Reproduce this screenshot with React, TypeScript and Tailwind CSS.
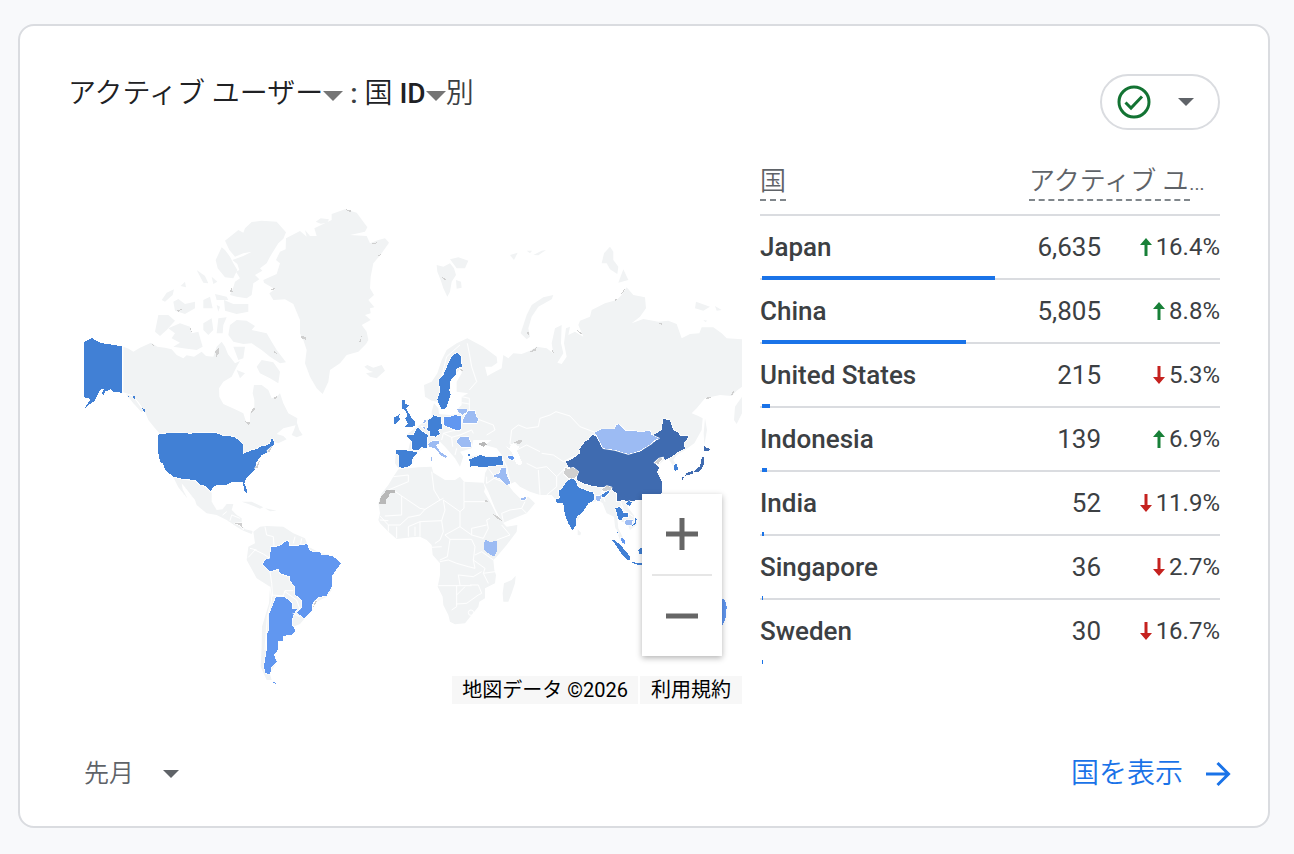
import clsx from "clsx";

type Shape = { d: string; fill: string };

const LAND = "#f1f3f4";
const NAVY = "#3f6bb0";
const BLUE = "#4180d5";
const SKY = "#6197f0";
const PALE = "#9cbbf3";
const GRAY = "#cfcfcf";
const DARK_GRAY = "#b8b8b8";

const rows = [
	{ name: "Japan", users: 6635, change: 16.4 },
	{ name: "China", users: 5805, change: 8.8 },
	{ name: "United States", users: 215, change: -5.3 },
	{ name: "Indonesia", users: 139, change: 6.9 },
	{ name: "India", users: 52, change: -11.9 },
	{ name: "Singapore", users: 36, change: -2.7 },
	{ name: "Sweden", users: 30, change: -16.7 },
];

const maxUsers = rows[0].users;

const northAmerica: Shape[] = [
	// Canada
	{
		fill: LAND,
		d: "M160,440L176,446 190,455 210,443 243,428 262,440 285,443 305,448 320,465 340,475 350,466 372,470 395,455 408,468 430,470 440,440 455,425 465,440 474,463 480,470 495,490 510,483 500,500 485,530 460,545 447,565 448,590 460,612 495,628 520,640 528,665 540,668 540,640 553,620 553,600 548,580 552,555 575,555 595,570 605,595 620,590 630,580 640,610 655,640 682,655 680,675 640,685 620,702 640,708 650,718 625,730 610,725 585,740 545,755 520,765 500,720 440,702 270,702 255,685 235,660 225,635 205,605 185,585 160,577Z",
	},
	{ fill: LAND, d: "M672,690L680,665 688,690 698,705 680,712 665,705Z" },
	// Arctic islands
	{
		fill: LAND,
		d: "M465,122L505,90 520,98 525,85 545,66 575,62 620,65 648,97 640,116 625,130 600,170 590,190 570,205 577,212 555,225 568,238 550,250 545,285 530,295 500,290 480,285 490,262 495,245 510,235 498,215 508,210 502,192 487,180 520,168 545,155 520,160 495,170 478,150Z",
	},
	{ fill: LAND, d: "M455,142L465,150 480,170 490,190 502,210 490,235 465,232 443,205 437,180Z" },
	{ fill: LAND, d: "M295,385L330,370 360,380 365,400 385,395 392,420 398,440 380,450 340,445 310,440 330,428 305,415 315,400Z" },
	{ fill: LAND, d: "M265,345L295,345 315,362 290,390 270,408 255,395Z" },
	{ fill: LAND, d: "M310,305L325,297 345,312 375,305 375,325 345,342 315,332Z" },
	{ fill: LAND, d: "M275,300L290,278 312,268 308,285 285,305Z" },
	{ fill: LAND, d: "M332,258L345,245 348,262ZM380,210L405,228 415,250 400,248ZM425,230L442,245 430,252Z" },
	{ fill: LAND, d: "M462,300L490,312 535,312 535,335 500,342 465,332Z" },
	{ fill: LAND, d: "M435,282L470,290 475,300 440,300ZM400,300L420,290 428,325 400,325ZM440,315L450,320 445,335Z" },
	{ fill: LAND, d: "M400,370L425,355 430,390 415,405 400,390ZM445,355L470,352 460,375 458,400 440,400Z" },
	{ fill: LAND, d: "M480,375L500,360 530,362 555,378 545,390 590,400 605,425 620,450 648,487 630,490 600,470 575,450 545,430 520,432 490,425 475,405Z" },
	{ fill: LAND, d: "M575,480L610,487 630,515 625,550 600,535 570,520 560,500Z" },
	{ fill: LAND, d: "M490,440L525,440 520,475 505,480ZM500,510L525,520 510,535Z" },
	{
		fill: GRAY,
		d: "M436,455L448,442 446,462 438,472ZM480,275L484,262 489,276ZM540,640L553,620 554,628 545,640ZM525,664L542,668 535,674ZM610,450L622,463 613,458ZM608,594L624,586 618,598ZM320,330L338,327 325,335ZM245,428L256,440 248,436ZM360,380L366,398 362,392Z",
	},
	// Alaska
	{
		fill: BLUE,
		d: "M42,427L65,414 75,420 85,426 100,430 120,433 157,439 157,578 145,577 130,575 122,568 105,575 100,587 96,580 102,566 92,568 80,590 75,602 60,612 42,628 60,600 55,595 42,592Z",
	},
	{ fill: LAND, d: "M168,582L190,590 220,632 214,636 190,610Z" },
	{ fill: BLUE, d: "M190,587L195,590 194,598 190,595ZM213,622L225,629 225,636 220,632ZM172,584L177,588 175,591Z" },
];

const greenland: Shape[] = [
	{
		fill: LAND,
		d: "M40,240L80,222 90,190 78,180 90,155 107,148 108,115 150,93 170,110 165,90 180,108 200,108 193,85 245,60 245,42 285,28 320,38 352,82 345,95 300,105 350,108 360,130 385,120 405,115 417,128 395,160 370,190 362,230 360,265 372,285 355,300 373,322 360,325 362,340 345,345 362,360 335,375 350,395 355,420 348,432 325,455 290,465 270,490 240,510 235,545 218,582 200,565 180,530 165,490 170,450 160,420 150,400 150,360 130,312 105,298 70,300 58,280 75,268 42,248Z",
	},
	{ fill: LAND, d: "M197,65L212,55 237,58 232,68 212,71Z" },
	// Iceland, Svalbard
	{ fill: LAND, d: "M343,500L358,512 370,516 348,520 360,530 380,535 405,512 395,495 370,503 352,495Z" },
	{ fill: LAND, d: "M560,195L580,200 600,190 612,205 618,225 605,245 600,275 592,290 580,265 572,240 562,215Z" },
	{ fill: LAND, d: "M600,178L625,172 655,182 645,205 620,205ZM618,240L633,245 635,263 620,266Z" },
	{
		fill: GRAY,
		d: "M150,407L166,410 170,420 156,415ZM380,168L398,160 388,170ZM285,27L308,33 300,36ZM365,130L382,127 375,133ZM60,268L77,264 70,270ZM577,232L590,238 583,240ZM328,425L335,408 333,427Z",
	},
];

const eurasia: Shape[] = [
	{
		fill: LAND,
		d: "M192,555L215,545 232,520 245,480 260,450 290,430 322,415 350,430 370,440 410,470 412,488 395,500 375,500 382,528 405,515 425,505 430,465 445,475 460,460 485,462 510,452 530,440 560,445 580,460 575,430 585,385 605,375 603,430 610,460 592,488 605,492 620,470 612,430 618,385 630,380 625,405 645,395 670,410 655,375 660,362 690,350 695,330 735,310 770,300 785,285 800,262 820,285 855,292 858,325 840,350 815,370 850,357 895,365 925,362 950,372 965,415 990,402 1018,400 1025,382 1060,382 1085,400 1100,415 1146,418 1146,560 1130,572 1115,588 1080,585 1035,595 1010,625 995,640 1015,648 1028,655 1025,690 1003,730 975,750 950,765 940,780 955,805 948,815 940,800 925,775 912,780 890,800 905,840 905,880 870,905 830,900 815,908 802,920 825,950 830,975 810,990 802,970 785,965 772,955 775,985 790,1015 795,1035 780,1020 765,980 762,950 740,940 728,910 715,900 705,905 690,905 665,940 650,965 638,993 620,960 605,905 585,897 575,885 540,885 510,875 480,860 465,845 445,855 460,875 480,895 505,890 525,910 500,940 430,968 425,965 405,925 385,875 372,850 375,820 385,800 330,795 330,770 355,765 400,770 425,765 410,745 375,735 395,720 365,720 340,720 335,745 300,755 310,770 300,800 285,775 255,740 240,725 225,730 200,740 165,760 160,785 140,805 115,805 105,790 108,750 145,750 152,720 135,708 165,685 200,660 215,650 215,635 222,610 235,625 237,642 270,645 295,642 295,625 305,615 305,590 325,580 290,575 290,545 305,520 306,500 280,530 270,550 272,590 245,630 232,605 215,602 195,590Z",
	},
	{ fill: "#ffffff", d: "M462,730L478,740 470,750 488,790 480,797 468,790 462,770 448,745 455,732Z" },
	// Arctic coast islands and Kamchatka
	{ fill: LAND, d: "M580,285L550,292 515,315 500,345 482,400 500,418 510,410 505,385 515,350 535,320 575,298Z" },
	{ fill: LAND, d: "M750,140L760,155 760,180 775,200 772,222 750,208 740,190 725,190 732,160ZM790,208L805,240 775,248Z" },
	{ fill: LAND, d: "M1008,305L1050,320 1030,332 1005,325ZM1065,318L1085,330 1070,332ZM1030,360L1042,362 1036,366Z" },
	{ fill: LAND, d: "M450,165L473,158 462,180ZM500,152L516,152 510,160ZM520,165L545,152 558,150 535,166Z" },
	{ fill: LAND, d: "M1146,590L1125,620 1122,660 1130,672 1146,640ZM1035,655L1041,690 1033,735 1031,700Z" },
	{ fill: LAND, d: "M653,988L663,998 661,1006 653,1005Z" },
	{
		fill: GRAY,
		d: "M505,458L530,442 528,452ZM574,445L583,460 577,455ZM650,388L668,402 658,400ZM890,366L910,372 905,375ZM756,299L772,298 768,302ZM782,282L797,263 790,278ZM1113,585L1122,570 1120,583ZM1035,593L1056,591 1040,598ZM504,385L508,410 502,400ZM462,728L478,719 488,722 478,732ZM296,505L312,510 305,515Z",
	},
	{ fill: DARK_GRAY, d: "M355,732L370,725 382,733 370,740Z" },
];

const eurasiaBorders =
	"M470,765L450,730 455,690 475,675 500,685 535,680 540,655 570,645 588,635 630,648 660,680 705,697M540,755L500,735 470,750M545,760L580,765 610,785 640,770 690,765M500,790L530,805 560,800 590,830 620,800M535,810L540,885M590,830L590,860 560,885M322,430L328,460 335,500 350,545 328,570M300,435L260,470 245,530M305,590L328,595 328,640M305,608L328,612M355,658L400,675 405,690 380,705M303,690L280,692 250,700M340,700L335,690 300,705 275,712 250,700 245,720M290,745L285,765M275,712L278,740M425,768L440,800 452,855M385,805L402,828M380,830L380,850 402,835 452,855M430,965L425,940 450,930 485,925 500,940M485,925L495,905M440,770L470,780M650,858L690,880 705,882M735,905L725,875 750,870M780,900L790,930 820,950M440,740L460,760M120,765L118,800";

const coloredEurope: Shape[] = [
	// Sweden
	{ fill: BLUE, d: "M290,38L295,42 303,50 305,80 290,85 287,105 272,120 268,150 272,165 265,185 258,205 245,208 232,180 240,155 237,120 250,105 265,70 275,50Z" },
	// United Kingdom, Ireland
	{ fill: BLUE, d: "M125,180L135,180 134,192 147,195 138,205 150,225 155,235 165,245 165,256 155,262 135,260 143,250 136,235 143,228 135,210 126,205Z" },
	{ fill: BLUE, d: "M102,230L112,229 119,221 118,232 120,240 106,252 101,250Z" },
	// France, Spain, Germany
	{ fill: BLUE, d: "M173,262L180,270 195,280 203,285 200,325 185,322 175,332 155,328 155,305 143,290 136,287 160,285 165,275Z" },
	{ fill: BLUE, d: "M108,330L150,332 172,338 158,355 156,370 145,380 125,384 118,380 118,345 108,340Z" },
	{ fill: BLUE, d: "M205,240L215,235 220,226 232,230 242,232 246,265 232,270 240,280 228,290 210,288 210,275 202,270Z" },
	{ fill: SKY, d: "M252,232L270,230 285,226 303,228 303,265 295,272 275,265 252,255Z" },
	{ fill: PALE, d: "M292,208L320,208 320,215 308,225 295,215Z" },
	{ fill: PALE, d: "M308,240L325,212 345,212 348,230 355,238 350,250 310,250Z" },
	{ fill: PALE, d: "M292,300L302,292 325,290 335,315 330,322 305,322 292,308Z" },
	{ fill: PALE, d: "M205,312L218,303 235,302 238,310 228,316 240,335 262,350 258,354 245,348 225,325 207,320Z" },
	{ fill: PALE, d: "M188,248L196,238 198,246 192,250ZM184,259L195,262 193,267ZM212,352H216V362H212Z" },
	// Turkey, Azerbaijan
	{ fill: BLUE, d: "M328,358L345,352 360,345 385,352 410,350 425,348 430,375 400,377 370,382 345,378 330,380ZM323,342H331V348H323Z" },
	{ fill: SKY, d: "M443,349L453,347 463,352 460,360 448,357Z" },
	{ fill: PALE, d: "M425,382L437,385 440,405 452,432 440,434 420,415 402,410 402,406 418,400Z" },
	{ fill: PALE, d: "M483,475L491,474 499,468 499,476 494,480 484,480Z" },
];

const africa: Shape[] = [
	{
		fill: LAND,
		d: "M115,28L175,22 215,20 220,38 255,60 285,60 300,50 312,65 370,68 375,85 372,95 390,125 410,165 430,190 440,200 472,195 470,215 440,255 410,290 400,300 403,330 408,345 405,370 375,385 375,415 358,425 355,440 335,465 315,490 285,493 270,485 265,465 250,435 248,410 233,380 240,345 240,310 218,285 215,255 200,240 180,230 155,232 110,237 85,215 60,190 55,180 60,160 55,130 65,100 85,75 100,50Z",
	},
	{ fill: LAND, d: "M467,347L465,370 455,400 445,425 430,425 428,400 432,370 455,360Z" },
];

const africaBorders =
	"M103,93L125,108 180,145 195,148 240,120 250,115 M215,35L222,90 240,120M312,65V125H380M312,125V145L300,155 250,120M125,108V165L75,168M195,148L180,165 145,172 120,195 85,195 60,168M110,200V235M145,200V230M165,200V228M180,185V230M180,185L245,182 255,150 250,120M245,182L250,215 240,240 225,250M255,225L300,200 300,155M300,200L335,225 370,235 385,205 380,180 390,175M270,238L335,238 345,260 340,300 345,325 325,320 290,310 265,300 240,305M345,285L365,275 400,300M340,300L375,325 370,340 385,370M235,377H335M295,345L300,375M295,345L340,350 365,335M290,378V440L275,450M315,380L290,405M290,432L320,430 355,405 365,400 355,375 330,375M370,340L405,335M410,240L450,225 425,195M100,50L145,45 145,65 85,90M335,225V205L380,195M245,260L215,262M255,225L270,238 262,290 240,300M325,458a8,8 0 1,0 16,0a8,8 0 1,0 -16,0M145,200L180,185M85,195V215M60,180L85,182";

const coloredAfrica: Shape[] = [
	{ fill: DARK_GRAY, d: "M80,90H104V98H90L86,112 78,118V131H57L62,112Z" },
	{ fill: PALE, d: "M374,238L390,247 411,242 411,275 402,290 390,283 372,270Z" },
	{ fill: GRAY, d: "M373,126L379,118 384,126ZM400,163L415,170 427,184 412,176Z" },
];

const americas: Shape[] = [
	{
		fill: LAND,
		d: "M310,232L345,240 375,242 405,262 425,278 425,305 440,330 458,328 470,312 490,312 485,330 500,345 515,355 515,375 525,388 548,393 545,402 520,392 500,380 470,360 440,345 410,340 380,315 375,300 345,262 335,250 338,268 352,295 325,262Z",
	},
	{ fill: LAND, d: "M515,305L545,305 580,322 570,326 535,312ZM585,325L620,332 600,334Z" },
	{
		fill: LAND,
		d: "M550,395L570,380 590,378 640,380 670,400 705,415 715,440 750,458 790,467 812,492 788,525 785,570 770,590 740,605 725,635 703,657 690,672 670,680 675,690 665,705 640,710 625,730 625,750 610,770 620,785 600,822 605,840 590,840 572,800 575,740 576,680 597,610 600,560 560,535 530,480 535,440 555,430Z",
	},
	{
		fill: BLUE,
		d: "M264,105L276,101 330,99 360,101 385,99 436,98 460,108 490,110 505,120 518,133 518,163 545,150 560,148 570,140 590,136 600,130 605,117 610,118 612,135 605,142 590,158 575,165 560,185 555,210 530,232 523,250 530,268 530,281 524,275 518,247 488,245 470,254 440,255 428,262 422,275 408,258 390,254 375,239 345,238 310,230 300,222 285,208 280,192 270,185 265,160Z",
	},
	{
		fill: SKY,
		d: "M603,440L618,440 635,435 640,428 655,422 658,437 685,437 712,432 718,450 730,456 750,457 755,465 785,467 800,478 812,490 787,527 785,560 770,587 745,592 728,610 725,632 703,655 680,637 697,622 695,600 675,583 675,560 660,542 660,530 630,520 625,507 600,514 590,505 578,493 585,480 600,475Z",
	},
	{
		fill: SKY,
		d: "M617,592L640,590 655,600 667,610 665,627 680,628 668,650 665,675 677,690 668,703 640,708 640,722 625,722 625,748 612,765 620,785 605,800 600,822 587,820 582,800 590,750 590,705 597,690 598,640 610,612ZM608,843L618,851 611,850Z",
	},
	{ fill: GRAY, d: "M495,370L514,368 520,388 510,376ZM736,602L728,625 742,603ZM592,152L606,140 598,158ZM555,205L570,180 563,203Z" },
];

const americasBorders =
	"M535,472L555,450 580,462 600,475M540,445L560,450M585,380L590,405 610,410 612,438M600,514L605,550 608,590M605,585L640,588 645,572 670,572M645,575L680,600 690,628M668,640L690,650M675,410L670,430M695,415L692,432M458,345L470,335M480,362L485,345 510,355M600,560L605,600 592,650 585,750";

const eastAsia: Shape[] = [
	{
		fill: NAVY,
		d: "M158,103L170,112 180,130 185,142 225,150 265,163 300,155 335,130 355,118 340,105 350,100 365,90 370,57 388,60 392,68 400,90 415,98 420,108 445,108 440,120 430,128 435,145 415,155 395,170 375,180 372,172 345,188 358,205 350,215 365,245 365,280 355,290 340,305 290,300 270,305 250,300 230,304 230,280 210,265 190,262 160,258 130,250 112,240 110,215 100,210 85,200 78,185 100,175 120,160 118,148 135,125 145,120Z",
	},
	{
		fill: PALE,
		d: "M165,98L185,88 225,88 228,75 236,73 250,85 255,92 280,92 300,97 330,92 335,105 357,115 345,120 335,130 300,152 265,162 225,150 190,145 180,125Z",
	},
	{
		fill: BLUE,
		d: "M80,245L95,235 105,240 115,262 140,272 160,278 163,300 145,310 125,340 110,350 108,375 97,392 85,370 75,345 70,310 50,308 48,297 60,295 55,272 65,268ZM176,290L195,278 212,267 206,280 196,290 188,292Z",
	},
	{ fill: PALE, d: "M168,288H184L180,302 170,303Z" },
	{ fill: GRAY, d: "M75,203L86,207 100,203 115,215 108,232 85,235 72,222Z" },
	{ fill: GRAY, d: "M186,268L200,258 215,262 214,269 190,274Z" },
	{ fill: GRAY, d: "M343,188L358,175 370,172 355,192Z" },
	// Indochina
	{ fill: BLUE, d: "M226,325L240,320 250,338 265,338 265,352 248,352 244,362 235,358 232,345Z" },
	{ fill: PALE, d: "M253,362L278,360 276,374 258,376Z" },
	{ fill: BLUE, d: "M256,310L268,303 276,308 270,318ZM284,350L290,358 288,372 276,378 284,368ZM228,390L236,402 231,398Z" },
	{ fill: SKY, d: "M242,412L253,417 256,432 246,428Z" },
	{ fill: BLUE, d: "M214,417L225,422 240,434 256,452 270,470 270,482 260,478 245,462 232,442ZM276,487L306,489 306,495 285,493ZM295,450L306,442V462H299Z" },
	// Korea, Japan
	{ fill: BLUE, d: "M402,194L411,192 414,210 404,213Z" },
	{
		fill: NAVY,
		d: "M486,171L492,173 492,194 480,214 462,217 468,207 480,199ZM438,220L460,212 458,221 436,227ZM425,230L432,231 429,240 426,239ZM489,154L493,150 492,138 500,144 513,147 502,154Z",
	},
	{ fill: SKY, d: "M545,595L555,600 560,620 558,650 550,672 545,678Z" },
];

function Shapes({ items, outline }: { items: Shape[]; outline?: boolean }) {
	return (
		<>
			{items.map((s) => (
				<g key={s.d} fill={s.fill}>
					{outline && <path d={s.d} stroke="#ffffff" strokeWidth={4} strokeLinejoin="round" />}
					<path d={s.d} shapeRendering={s.fill === LAND ? "auto" : "crispEdges"} />
				</g>
			))}
		</>
	);
}

function WorldMap() {
	return (
		<svg
			viewBox="84 196 658 508"
			className="block w-full"
			role="img"
			aria-label="国別のアクティブ ユーザー"
		>
			<g transform="translate(250 200) scale(0.33333)">
				<Shapes items={greenland} />
			</g>
			<g transform="translate(70 200) scale(0.33333)">
				<Shapes items={northAmerica} />
			</g>
			<g transform="translate(360 200) scale(0.33333)">
				<Shapes items={eurasia} />
				<path d={eurasiaBorders} fill="none" stroke="#ffffff" strokeWidth={3} />
			</g>
			<g transform="translate(360 460) scale(0.33333)">
				<Shapes items={africa} />
				<path d={africaBorders} fill="none" stroke="#ffffff" strokeWidth={3} />
				<Shapes items={coloredAfrica} />
			</g>
			<g transform="translate(70 400) scale(0.33333)">
				<Shapes items={americas} outline />
				<path d={americasBorders} fill="none" stroke="#ffffff" strokeWidth={3} />
			</g>
			<g transform="translate(360 340) scale(0.33333)">
				<Shapes items={coloredEurope} outline />
			</g>
			<g transform="translate(540 400) scale(0.33333)">
				<Shapes items={eastAsia} outline />
			</g>
		</svg>
	);
}

function MapPanel() {
	return (
		<div className="relative pt-[42px]">
			<WorldMap />
			<div className="absolute right-5 bottom-12 flex w-20 flex-col items-center bg-white shadow-[0_2px_6px_rgba(0,0,0,0.3)]">
				<button type="button" aria-label="拡大" className="flex h-20 w-full items-center justify-center">
					<svg viewBox="0 0 32 32" className="size-8">
						<path d="M16 0V32M0 16H32" stroke="#666666" strokeWidth={5} />
					</svg>
				</button>
				<div className="h-0.5 w-15 bg-[#e6e6e6]" />
				<button type="button" aria-label="縮小" className="flex h-20 w-full items-center justify-center">
					<svg viewBox="0 0 32 32" className="size-8">
						<path d="M0 16H32" stroke="#666666" strokeWidth={5} />
					</svg>
				</button>
			</div>
			<div className="absolute right-0 bottom-0 flex gap-0.5 text-xl leading-7 text-black">
				<span className="bg-[#f7f7f7] px-2.5">地図データ ©2026</span>
				<a href="#terms" className="bg-[#f7f7f7] px-[11px]">
					利用規約
				</a>
			</div>
		</div>
	);
}

function Caret({ className }: { className?: string }) {
	return (
		<svg viewBox="0 0 20 10" className={className} fill="currentColor">
			<path d="M0 0H20L10 10Z" />
		</svg>
	);
}

function Change({ value }: { value: number }) {
	const up = value > 0;
	return (
		<span className="flex items-center justify-end gap-1">
			<svg
				viewBox="0 0 12 18"
				className={clsx("h-[18px] w-3", up ? "text-[#188038]" : "rotate-180 text-[#c5221f]")}
				fill="currentColor"
			>
				<path d="M6 0L12 7H7.5V18H4.5V7H0Z" />
			</svg>
			{Math.abs(value).toFixed(1)}%
		</span>
	);
}

function CountryTable() {
	return (
		<table className="w-full table-fixed border-separate border-spacing-0 self-start text-[#3c4043]">
			<colgroup>
				<col />
				<col className="w-[72px]" />
				<col className="w-[119px]" />
			</colgroup>
			<thead>
				<tr className="h-[62px] text-left text-[26px] leading-9 text-[#5f6368]">
					<th className="border-b-2 border-[#dadce0] p-0 pb-[13px] align-bottom font-[350]">
						<span className="inline-block border-b-2 border-dashed border-[#80868b] align-bottom">国</span>
					</th>
					<th colSpan={2} className="border-b-2 border-[#dadce0] p-0 pb-[13px] align-bottom font-[350]">
						<span className="block w-[182px] truncate">アクティブ ユーザー</span>
						<span className="block w-[161px] border-b-2 border-dashed border-[#80868b]" />
					</th>
				</tr>
			</thead>
			<tbody>
				{rows.map((r, i) => {
					const cell = clsx(
						"h-16 border-b-2 p-0",
						i < rows.length - 1 ? "border-[#dadce0]" : "border-transparent",
					);
					return (
						<tr key={r.name}>
							<th scope="row" className={clsx(cell, "relative text-left text-[26px] font-medium")}>
								{r.name}
								<span
									className="absolute -bottom-0.5 left-0.5 h-1 bg-[#1a73e8]"
									style={{ width: `${(r.users / maxUsers) * 86.5}%` }}
								/>
							</th>
							<td className={clsx(cell, "text-right text-[26px]")}>{r.users.toLocaleString("en-US")}</td>
							<td className={clsx(cell, "text-right text-2xl")}>
								<Change value={r.change} />
							</td>
						</tr>
					);
				})}
			</tbody>
		</table>
	);
}

export default function App() {
	return (
		<main
			lang="ja"
			className="min-h-screen bg-[#f8f9fb] pt-6 pr-6 pb-[26px] pl-[18px] font-['Roboto','Noto_Sans_CJK_JP',sans-serif]"
		>
			<section className="rounded-2xl border-2 border-[#dadce0] bg-white pt-12 pb-[26px]">
				<header className="flex items-start justify-between pr-12 pl-12">
					<h2 className="flex items-center text-[28px] leading-10 font-[350] text-[#3c4043]">
						<button type="button" className="flex items-center text-[#202124]">
							アクティブ ユーザー
							<Caret className="mt-1 h-2.5 w-5 text-[#757575]" />
						</button>
						<span className="mx-[7px] font-medium">:</span>
						<button type="button" className="flex items-center text-[#202124]">
							<span className="whitespace-pre">
								国 <span className="font-medium">ID</span>
							</span>
							<Caret className="mt-1 h-2.5 w-5 text-[#757575]" />
						</button>
						別
					</h2>
					<button
						type="button"
						aria-label="データ品質"
						className="flex h-14 w-[120px] items-center gap-[26px] rounded-full border-2 border-[#dadce0] pl-3.5"
					>
						<svg viewBox="0 0 36 36" className="size-9" fill="none" stroke="#137333" strokeWidth={3}>
							<circle cx="18" cy="18" r="15" />
							<path d="M9.5 18.5L15 24L26 12.5" />
						</svg>
						<Caret className="h-2 w-4 text-[#5f6368]" />
					</button>
				</header>

				<div className="mt-6 grid grid-cols-[329fr_230fr] gap-[18px] pr-12 pl-16">
					<MapPanel />
					<CountryTable />
				</div>

				<footer className="mt-11 flex h-[52px] items-center justify-between pr-[37px] pl-16">
					<label className="relative flex items-center">
						<span className="sr-only">期間</span>
						<select className="h-11 appearance-none bg-transparent pr-12 text-[25px] leading-10 font-[350] text-[#5f6368]">
							<option>先月</option>
							<option>先週</option>
						</select>
						<Caret className="pointer-events-none absolute right-1 h-2 w-4 text-[#5f6368]" />
					</label>
					<a href="#countries" className="flex items-center gap-5 text-[28px] font-[350] text-[#1a73e8]">
						国を表示
						<svg viewBox="0 0 28 28" className="size-7" fill="none" stroke="currentColor" strokeWidth={3}>
							<path d="M3 14H25M14.5 3L25.5 14L14.5 25" />
						</svg>
					</a>
				</footer>
			</section>
		</main>
	);
}
